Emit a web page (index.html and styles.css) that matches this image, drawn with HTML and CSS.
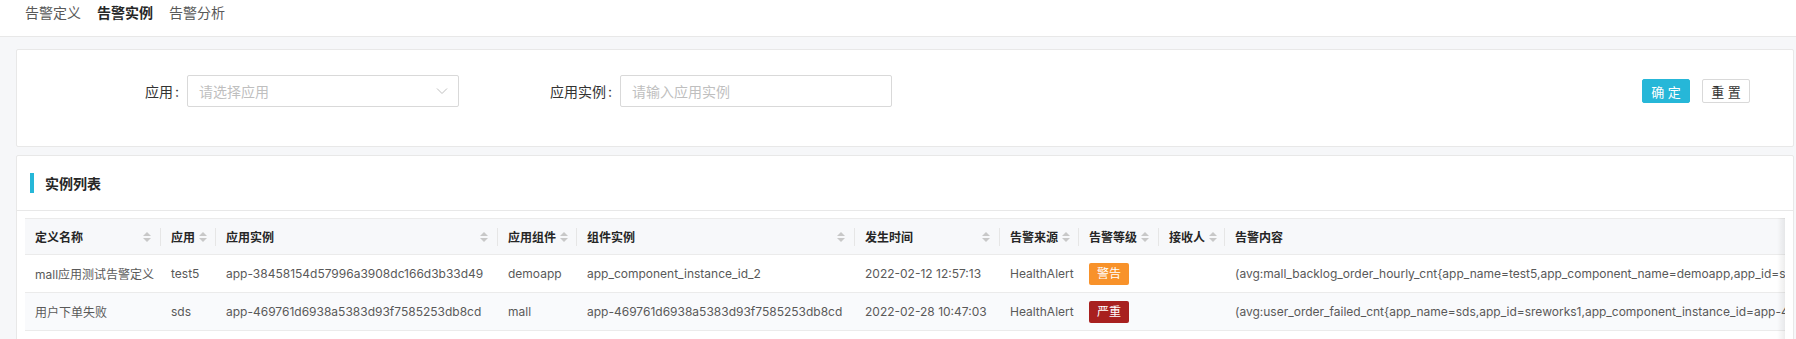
FILE: index.html
```html
<!DOCTYPE html>
<html lang="zh-CN">
<head>
    <meta charset="UTF-8">
    <meta name="viewport" content="width=device-width, initial-scale=1.0">
    <title>告警实例</title>
    <link rel="stylesheet" href="styles.css">
</head>
<body>
    <div class="nav">
        <a>告警定义</a>
        <a class="active">告警实例</a>
        <a>告警分析</a>
    </div>

    <div class="main">
        <div class="card filter">
            <div class="filter_form">
                <div class="form_item">
                    <label>应用</label>
                    <div class="select">
                        <span class="placeholder">请选择应用</span>
                        <svg class="arrow" width="12" height="8" viewBox="0 0 12 8">
                            <polyline points="1,1.5 6,6.5 11,1.5" fill="none" stroke="#bfbfbf" stroke-width="1"/>
                        </svg>
                    </div>
                </div>
                <div class="form_item">
                    <label>应用实例</label>
                    <input class="input" type="text" placeholder="请输入应用实例">
                </div>
                <div class="actions">
                    <button class="btn primary">确 定</button>
                    <button class="btn">重 置</button>
                </div>
            </div>
        </div>

        <div class="card list">
            <div class="card_head"><span class="bar"></span>实例列表</div>
            <div class="card_body">
                <div class="table_wrap">
                    <table>
                        <colgroup>
                            <col style="width:136px">
                            <col style="width:55px">
                            <col style="width:282px">
                            <col style="width:79px">
                            <col style="width:278px">
                            <col style="width:145px">
                            <col style="width:79px">
                            <col style="width:80px">
                            <col style="width:66px">
                            <col style="width:900px">
                        </colgroup>
                        <thead>
                            <tr>
                                <th><div class="th_in">定义名称<span class="sorter"></span></div></th>
                                <th><div class="th_in">应用<span class="sorter"></span></div></th>
                                <th><div class="th_in">应用实例<span class="sorter"></span></div></th>
                                <th><div class="th_in">应用组件<span class="sorter"></span></div></th>
                                <th><div class="th_in">组件实例<span class="sorter"></span></div></th>
                                <th><div class="th_in">发生时间<span class="sorter"></span></div></th>
                                <th><div class="th_in">告警来源<span class="sorter"></span></div></th>
                                <th><div class="th_in">告警等级<span class="sorter"></span></div></th>
                                <th><div class="th_in">接收人<span class="sorter"></span></div></th>
                                <th class="last"><div class="th_in">告警内容</div></th>
                            </tr>
                        </thead>
                        <tbody>
                            <tr>
                                <td>mall应用测试告警定义</td>
                                <td>test5</td>
                                <td>app-38458154d57996a3908dc166d3b33d49</td>
                                <td>demoapp</td>
                                <td>app_component_instance_id_2</td>
                                <td>2022-02-12 12:57:13</td>
                                <td>HealthAlert</td>
                                <td><span class="tag warn">警告</span></td>
                                <td></td>
                                <td>(avg:mall_backlog_order_hourly_cnt{app_name=test5,app_component_name=demoapp,app_id=sreworks1,app_component_instance_id=app_component_instance_id_2})</td>
                            </tr>
                            <tr class="odd">
                                <td>用户下单失败</td>
                                <td>sds</td>
                                <td>app-469761d6938a5383d93f7585253db8cd</td>
                                <td>mall</td>
                                <td>app-469761d6938a5383d93f7585253db8cd</td>
                                <td>2022-02-28 10:47:03</td>
                                <td>HealthAlert</td>
                                <td><span class="tag fatal">严重</span></td>
                                <td></td>
                                <td>(avg:user_order_failed_cnt{app_name=sds,app_id=sreworks1,app_component_instance_id=app-469761d6938a5383d93f7585253db8cd})</td>
                            </tr>
                            <tr>
                                <td>&nbsp;</td>
                                <td></td><td></td><td></td><td></td><td></td><td></td><td></td><td></td><td></td>
                            </tr>
                        </tbody>
                    </table>
                </div>
            </div>
        </div>
    </div>
</body>
</html>
```

FILE: styles.css
```css
* {
    box-sizing: border-box;
}
body {
    margin: 0;
    background: #f6f7f9;
    font-family: Inter, "Noto Sans CJK SC", sans-serif;
    color: #333;
    overflow: hidden;
}
.nav {
    height: 37px;
    background: #fff;
    border-bottom: 1px solid #e8e8e8;
    padding: 0 0 0 25px;
    display: flex;
    gap: 16px;
}
.nav a {
    font-size: 14px;
    line-height: 25px;
    color: #595959;
}
.nav a.active {
    color: #262626;
    font-weight: bold;
}
.main {
    padding: 12px 2px 0 16px;
}
.card {
    background: #fff;
    border: 1px solid #e8e8e8;
    border-radius: 2px;
}
.filter {
    padding: 25px 24px 39px 24px;
}
.filter_form {
    display: flex;
    align-items: center;
}
.form_item {
    display: flex;
    align-items: center;
    width: 418px;
    margin-right: 15px;
}
.form_item label {
    width: 146px;
    text-align: right;
    font-size: 14px;
    color: #333;
}
.form_item label::after {
    content: ":";
    margin: 0 8px 0 2px;
}
.select,
.input {
    width: 272px;
    height: 32px;
    border: 1px solid #d9d9d9;
    border-radius: 2px;
    background: #fff;
    font-family: inherit;
    font-size: 14px;
}
.select {
    display: flex;
    align-items: center;
    justify-content: space-between;
    padding: 0 10px 0 11px;
}
.placeholder {
    color: #bfbfbf;
}
.input {
    padding: 0 11px;
    outline: none;
}
.input::placeholder {
    color: #bfbfbf;
}
.actions {
    flex: 1;
    display: flex;
    justify-content: flex-end;
    gap: 12px;
    margin-right: 19px;
}
.btn {
    width: 48px;
    height: 24px;
    padding: 0;
    font-family: inherit;
    font-size: 13px;
    color: #333;
    background: #fff;
    border: 1px solid #d9d9d9;
    border-radius: 2px;
}
.btn.primary {
    background: #26b7d8;
    border-color: #26b7d8;
    color: #fff;
}
.list {
    margin-top: 8px;
}
.card_head {
    height: 55px;
    border-bottom: 1px solid #e8e8e8;
    display: flex;
    align-items: center;
    padding-left: 13px;
    font-size: 14px;
    font-weight: bold;
    color: #262626;
}
.card_head .bar {
    width: 4px;
    height: 20px;
    background: #26b7d8;
    margin-right: 11px;
}
.card_body {
    padding: 7px 8px 0 8px;
}
.table_wrap {
    position: relative;
    overflow: hidden;
}
.table_wrap::after {
    content: "";
    position: absolute;
    top: 0;
    right: 0;
    bottom: 0;
    width: 8px;
    background: linear-gradient(to right, rgba(0, 0, 0, 0), rgba(0, 0, 0, 0.07));
}
table {
    table-layout: fixed;
    border-collapse: separate;
    border-spacing: 0;
    width: 2100px;
    font-size: 12px;
}
th {
    height: 37px;
    padding: 0;
    background: #f7f8fa;
    border-top: 1px solid #ebebeb;
    border-bottom: 1px solid #ebebeb;
    text-align: left;
    font-weight: 600;
    color: #262626;
    position: relative;
}
th::before {
    content: "";
    position: absolute;
    right: 0;
    top: 50%;
    height: 18px;
    margin-top: -9px;
    width: 1px;
    background: #e6e6e6;
}
th.last::before {
    display: none;
}
.th_in {
    display: flex;
    align-items: center;
    justify-content: space-between;
    padding: 0 10px;
    white-space: nowrap;
}
.sorter {
    display: inline-flex;
    flex-direction: column;
    gap: 2px;
    margin-left: 4px;
}
.sorter::before,
.sorter::after {
    content: "";
    display: block;
    border-left: 4px solid transparent;
    border-right: 4px solid transparent;
}
.sorter::before {
    border-bottom: 4px solid #c8c8c8;
}
.sorter::after {
    border-top: 4px solid #c8c8c8;
}
td {
    height: 38px;
    padding: 0 10px;
    border-bottom: 1px solid #ebebeb;
    color: #595959;
    white-space: nowrap;
    overflow: hidden;
}
tr.odd td {
    background: #f9fafc;
}
.tag {
    display: inline-block;
    width: 40px;
    height: 22px;
    line-height: 22px;
    text-align: center;
    color: #fff;
    border-radius: 2px;
    font-size: 12px;
}
.tag.warn {
    background: #f8922a;
}
.tag.fatal {
    background: #a8201f;
}
```
